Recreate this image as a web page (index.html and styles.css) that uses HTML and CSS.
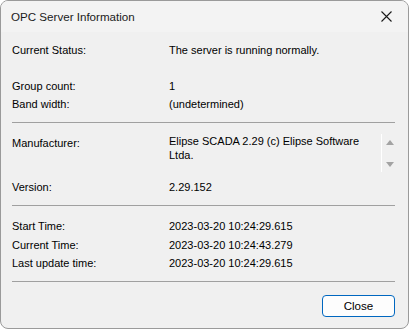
FILE: index.html
```html
<!DOCTYPE html>
<html lang="en">
<head>
  <meta charset="UTF-8">
  <title>OPC Server Information</title>
  <link rel="stylesheet" href="styles.css">
</head>
<body>
  <div class="window">
    <header class="titlebar">
      <span class="title">OPC Server Information</span>
      <button class="close-x" aria-label="Close">
        <svg width="11" height="11" viewBox="0 0 11 11"><path d="M0.5 0.5 L10.5 10.5 M10.5 0.5 L0.5 10.5" stroke="#1a1a1a" stroke-width="1.1" fill="none"/></svg>
      </button>
    </header>
    <main class="content">
      <div class="row">
        <span class="label">Current Status:</span>
        <span class="value">The server is running normally.</span>
      </div>
      <div class="row spaced">
        <span class="label">Group count:</span>
        <span class="value">1</span>
      </div>
      <div class="row">
        <span class="label">Band width:</span>
        <span class="value">(undetermined)</span>
      </div>
      <hr class="sep">
      <div class="row multi">
        <span class="label">Manufacturer:</span>
        <div class="value scrollbox">
          <span class="text">Elipse SCADA 2.29 (c) Elipse Software Ltda.</span>
          <div class="scroll">
            <span class="arrow up"></span>
            <span class="arrow down"></span>
          </div>
        </div>
      </div>
      <div class="row">
        <span class="label">Version:</span>
        <span class="value">2.29.152</span>
      </div>
      <hr class="sep">
      <div class="row times">
        <span class="label">Start Time:</span>
        <span class="value">2023-03-20 10:24:29.615</span>
      </div>
      <div class="row times">
        <span class="label">Current Time:</span>
        <span class="value">2023-03-20 10:24:43.279</span>
      </div>
      <div class="row times">
        <span class="label">Last update time:</span>
        <span class="value">2023-03-20 10:24:29.615</span>
      </div>
      <hr class="sep last">
      <div class="actions">
        <button class="btn">Close</button>
      </div>
    </main>
  </div>
</body>
</html>
```

FILE: styles.css
```css
*, *::before, *::after { box-sizing: border-box; }
html, body { margin: 0; padding: 0; background: #fff; }
body {
  font-family: 'Liberation Sans', Arial, sans-serif;
  font-size: 11px;
  color: #000;
}
.window {
  width: 409px;
  height: 329px;
  border: 1px solid #9a9a9a;
  border-radius: 8px;
  background: #f0f0f0;
  overflow: hidden;
  display: flex;
  flex-direction: column;
}
.titlebar {
  height: 31px;
  flex: none;
  display: flex;
  align-items: center;
  justify-content: space-between;
  padding: 0 16px 0 10px;
  background: #f3f3f3;
}
.title { color: #1a1a1a; font-size: 11.6px; }
.close-x {
  border: none;
  background: none;
  padding: 0;
  width: 11px;
  height: 11px;
  display: flex;
}
.content {
  flex: 1;
  padding: 9px 12px 0 11px;
}
.row {
  display: flex;
  line-height: 18px;
}
.row.spaced { margin-top: 18px; }
.row.times { line-height: 18.5px; }
.label { width: 157px; flex: none; }
.value { flex: 1; }
.sep {
  border: none;
  border-top: 1px solid #a0a0a0;
  margin: 9px 1px 11px 0;
}
.sep.last { margin: 8px 1px 13px 0; }
.row.multi { margin-top: 0; margin-bottom: 6px; }
.scrollbox {
  display: flex;
  height: 38px;
  line-height: 14px;
}
.scrollbox .text { flex: 1; padding-top: 0; width: 200px; }
.scroll {
  width: 15px;
  flex: none;
  border-left: 1px solid #fff;
  display: flex;
  flex-direction: column;
  align-items: center;
  justify-content: space-between;
  padding: 6px 0 5px 2px;
}
.arrow {
  width: 0;
  height: 0;
  border-left: 4px solid transparent;
  border-right: 4px solid transparent;
}
.arrow.up { border-bottom: 5px solid #a3a3a3; }
.arrow.down { border-top: 5px solid #a3a3a3; }
.actions {
  display: flex;
  justify-content: flex-end;
  padding-right: 1px;
}
.btn {
  width: 73px;
  height: 22px;
  border: 1px solid #0067c0;
  border-radius: 4px;
  background: #fdfdfd;
  font-family: inherit;
  font-size: 11.6px;
  color: #000;
  padding: 0;
}
```
